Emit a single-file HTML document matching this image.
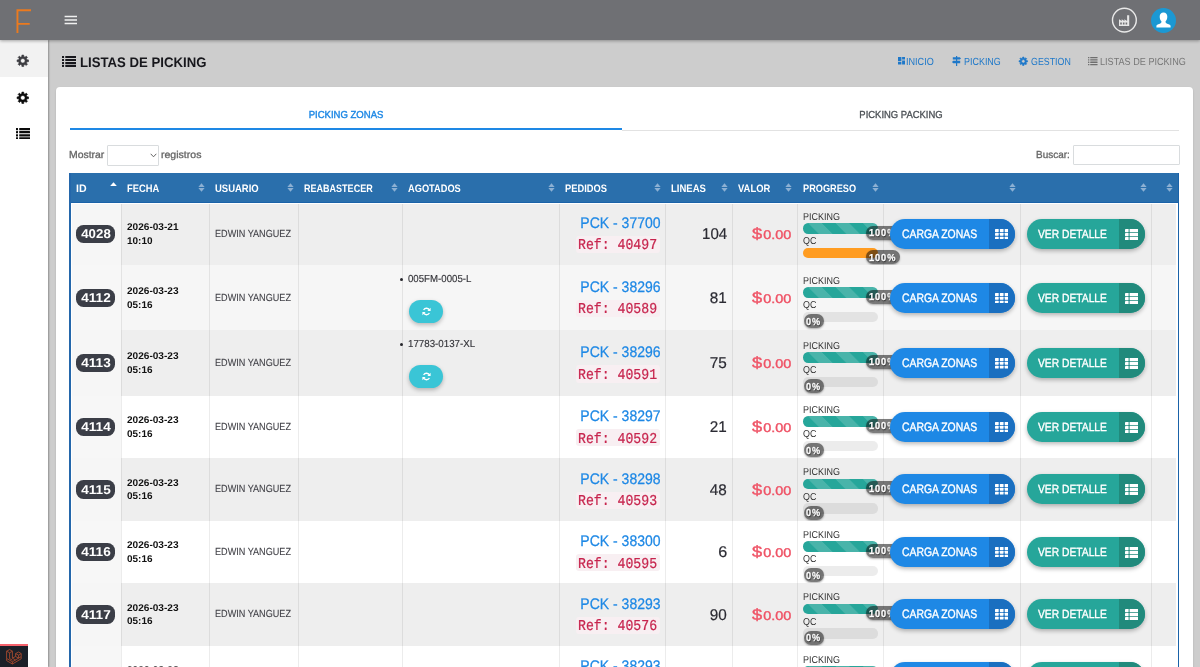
<!DOCTYPE html>
<html lang="es"><head><meta charset="utf-8"><title>Listas de Picking</title>
<style>
html,body{margin:0;padding:0}
body{width:1200px;height:667px;overflow:hidden;background:#cdcdcd;position:relative;font-family:'Liberation Sans',sans-serif}
.a{position:absolute;display:block}
.t{position:absolute;white-space:nowrap;display:block;text-rendering:geometricPrecision}
#top{left:0;top:0;width:1200px;height:40.4px;background:#6f7074;box-shadow:0 1px 3px rgba(0,0,0,.32);z-index:5}
#side{left:0;top:40px;width:48px;height:627px;background:#fff;box-shadow:1px 0 1.5px rgba(0,0,0,.3);z-index:4}
#card{left:56px;top:87px;width:1137px;height:600px;background:#fff;border-radius:4px;box-shadow:0 1px 2px rgba(0,0,0,.15)}
.row{left:71.8px;width:1104.6px}
.sep{top:0;width:1px;height:100%;background:rgba(0,0,0,.075)}
.badge{background:#3b3e47;border-radius:7.5px;height:18.2px;width:39.3px}
.btn{height:30px;border-radius:15px;overflow:hidden;box-shadow:0 2px 4px rgba(0,0,0,.28)}
.pill{border-radius:7px;background:rgba(10,10,10,.53);height:14px;box-shadow:0 1px 2px rgba(0,0,0,.3)}
#w{left:0;top:0;width:1200px;height:667px;overflow:hidden;will-change:transform}
</style></head><body><div id="w" class="a">

<svg class="a" style="left:62px;top:56px" width="14.3" height="10.9" viewBox="0 0 14.3 10.9"><rect x="0" y="0.00" width="2.04" height="2.07" rx="0.3" fill="#17171c"/><rect x="3.27" y="0.00" width="11.03" height="2.07" rx="0.3" fill="#17171c"/><rect x="0" y="2.94" width="2.04" height="2.07" rx="0.3" fill="#17171c"/><rect x="3.27" y="2.94" width="11.03" height="2.07" rx="0.3" fill="#17171c"/><rect x="0" y="5.89" width="2.04" height="2.07" rx="0.3" fill="#17171c"/><rect x="3.27" y="5.89" width="11.03" height="2.07" rx="0.3" fill="#17171c"/><rect x="0" y="8.83" width="2.04" height="2.07" rx="0.3" fill="#17171c"/><rect x="3.27" y="8.83" width="11.03" height="2.07" rx="0.3" fill="#17171c"/></svg>
<span class="t" style="left:80.14px;transform-origin:0 50%;transform:scale(0.2353,0.2484);top:25.90px;font-size:56px;line-height:72px;color:#17171c;font-weight:700;font-family:'Liberation Sans',sans-serif;">LISTAS DE PICKING</span>
<svg class="a" style="left:897.5px;top:57.2px" width="7.5" height="7.6" viewBox="0 0 7.5 7.6"><path d="M0 0h3.4v4.2h-3.4z M4.1 0h3.4v2.6h-3.4z M0 5h3.4v2.6h-3.4z M4.1 3.4h3.4v4.2h-3.4z" fill="#1e78c9"/></svg>
<span class="t" style="left:905.90px;transform-origin:0 50%;transform:scale(0.2274,0.2572);top:35.80px;font-size:40px;line-height:52px;color:#1e78c9;font-weight:400;font-family:'Liberation Sans',sans-serif;">INICIO</span>
<svg class="a" style="left:952px;top:56px" width="9" height="10" viewBox="0 0 9 10"><path d="M4 0h1.2v10h-1.2z M0.8 1.2h7l1.2 1.2l-1.2 1.2h-7z M1.2 4.8h7v2.4h-7l-1.2 -1.2z" fill="#1e78c9"/></svg>
<span class="t" style="left:964.40px;transform-origin:0 50%;transform:scale(0.2237,0.2572);top:35.80px;font-size:40px;line-height:52px;color:#1e78c9;font-weight:400;font-family:'Liberation Sans',sans-serif;">PICKING</span>
<svg class="a" style="left:1018.4000000000001px;top:55.900000000000006px" width="10.6" height="10.6" viewBox="-5.3 -5.3 10.6 10.6"><path d="M3.10 -0.71 L4.25 -0.67 L4.25 0.67 L3.10 0.71 L2.70 1.69 L3.48 2.53 L2.53 3.48 L1.69 2.70 L0.71 3.10 L0.67 4.25 L-0.67 4.25 L-0.71 3.10 L-1.69 2.70 L-2.53 3.48 L-3.48 2.53 L-2.70 1.69 L-3.10 0.71 L-4.25 0.67 L-4.25 -0.67 L-3.10 -0.71 L-2.70 -1.69 L-3.48 -2.53 L-2.53 -3.48 L-1.69 -2.70 L-0.71 -3.10 L-0.67 -4.25 L0.67 -4.25 L0.71 -3.10 L1.69 -2.70 L2.53 -3.48 L3.48 -2.53 L2.70 -1.69 Z M-1.72 0.00 a1.72 1.72 0 1 0 3.44 0 a1.72 1.72 0 1 0 -3.44 0 Z" fill="#1e78c9" fill-rule="evenodd" stroke="#1e78c9" stroke-width="0.6" stroke-linejoin="round"/></svg>
<span class="t" style="left:1030.60px;transform-origin:0 50%;transform:scale(0.2211,0.2572);top:35.80px;font-size:40px;line-height:52px;color:#1e78c9;font-weight:400;font-family:'Liberation Sans',sans-serif;">GESTION</span>
<svg class="a" style="left:1088.4px;top:57.4px" width="9.6" height="8.2" viewBox="0 0 9.6 8.2"><rect x="0" y="0.00" width="1.37" height="1.31" rx="0.3" fill="#6e6e6e"/><rect x="2.19" y="0.00" width="7.41" height="1.31" rx="0.3" fill="#6e6e6e"/><rect x="0" y="2.30" width="1.37" height="1.31" rx="0.3" fill="#6e6e6e"/><rect x="2.19" y="2.30" width="7.41" height="1.31" rx="0.3" fill="#6e6e6e"/><rect x="0" y="4.59" width="1.37" height="1.31" rx="0.3" fill="#6e6e6e"/><rect x="2.19" y="4.59" width="7.41" height="1.31" rx="0.3" fill="#6e6e6e"/><rect x="0" y="6.89" width="1.37" height="1.31" rx="0.3" fill="#6e6e6e"/><rect x="2.19" y="6.89" width="7.41" height="1.31" rx="0.3" fill="#6e6e6e"/></svg>
<span class="t" style="left:1100.20px;transform-origin:0 50%;transform:scale(0.2275,0.2572);top:35.80px;font-size:40px;line-height:52px;color:#777;font-weight:400;font-family:'Liberation Sans',sans-serif;">LISTAS DE PICKING</span>
<div id="card" class="a"></div>
<span class="t" style="left:346.1px;transform-origin:50% 50%;transform:translateX(-50%) scale(0.2384,0.2536);top:88.60px;font-size:40px;line-height:52px;color:#1e88e5;font-weight:400;font-family:'Liberation Sans',sans-serif;-webkit-text-stroke:1.6px #1e88e5;">PICKING ZONAS</span>
<span class="t" style="left:901px;transform-origin:50% 50%;transform:translateX(-50%) scale(0.2362,0.2536);top:88.60px;font-size:40px;line-height:52px;color:#4b5055;font-weight:400;font-family:'Liberation Sans',sans-serif;-webkit-text-stroke:1.2px #4b5055;">PICKING PACKING</span>
<div class="a" style="left:622px;top:129.5px;width:557px;height:1px;background:#e2e2e2"></div>
<div class="a" style="left:69.5px;top:128.2px;width:552.8px;height:1.9px;background:#1e88e5"></div>
<span class="t" style="left:69.35px;transform-origin:0 50%;transform:scale(0.2604,0.2536);top:128.70px;font-size:40px;line-height:52px;color:#666;font-weight:400;font-family:'Liberation Sans',sans-serif;-webkit-text-stroke:1.2px #666;">Mostrar</span>
<div class="a" style="left:107.2px;top:145px;width:49.8px;height:18.6px;border:1px solid #d9dcde;border-radius:1px;background:#fff;box-sizing:content-box"></div>
<svg class="a" style="left:149.6px;top:153.3px" width="7" height="5" viewBox="0 0 7 5"><path d="M0.7 0.8 L3.5 3.8 L6.3 0.8" fill="none" stroke="#555" stroke-width="0.9"/></svg>
<span class="t" style="left:161.35px;transform-origin:0 50%;transform:scale(0.2634,0.2536);top:128.70px;font-size:40px;line-height:52px;color:#666;font-weight:400;font-family:'Liberation Sans',sans-serif;-webkit-text-stroke:1.2px #666;">registros</span>
<span class="t" style="left:1035.60px;transform-origin:0 50%;transform:scale(0.2492,0.2536);top:128.60px;font-size:40px;line-height:52px;color:#666;font-weight:400;font-family:'Liberation Sans',sans-serif;-webkit-text-stroke:1.2px #666;">Buscar:</span>
<div class="a" style="left:1073.3px;top:145px;width:104.4px;height:18.4px;border:1px solid #d9dcde;border-radius:1px;background:#fff;box-sizing:content-box"></div>
<div class="a" style="left:69.2px;top:173px;width:1109.8px;height:29.5px;background:#2a6fac;border-bottom:1.2px solid #1a62a8;box-sizing:border-box"></div>
<div class="a" style="left:69.2px;top:173px;width:1.6px;height:500px;background:#2467ab"></div>
<div class="a" style="left:1177.9px;top:173px;width:1.2px;height:500px;background:#1a62a8"></div>
<span class="t" style="left:75.90px;transform-origin:0 50%;transform:scale(0.2650,0.2681);top:162.60px;font-size:40px;line-height:52px;color:#fff;font-weight:700;font-family:'Liberation Sans',sans-serif;">ID</span>
<span class="t" style="left:126.60px;transform-origin:0 50%;transform:scale(0.2337,0.2681);top:162.60px;font-size:40px;line-height:52px;color:#fff;font-weight:700;font-family:'Liberation Sans',sans-serif;">FECHA</span>
<span class="t" style="left:215.00px;transform-origin:0 50%;transform:scale(0.2369,0.2681);top:162.60px;font-size:40px;line-height:52px;color:#fff;font-weight:700;font-family:'Liberation Sans',sans-serif;">USUARIO</span>
<span class="t" style="left:303.90px;transform-origin:0 50%;transform:scale(0.2256,0.2681);top:162.60px;font-size:40px;line-height:52px;color:#fff;font-weight:700;font-family:'Liberation Sans',sans-serif;">REABASTECER</span>
<span class="t" style="left:408.40px;transform-origin:0 50%;transform:scale(0.2314,0.2681);top:162.60px;font-size:40px;line-height:52px;color:#fff;font-weight:700;font-family:'Liberation Sans',sans-serif;">AGOTADOS</span>
<span class="t" style="left:565.30px;transform-origin:0 50%;transform:scale(0.2338,0.2681);top:162.60px;font-size:40px;line-height:52px;color:#fff;font-weight:700;font-family:'Liberation Sans',sans-serif;">PEDIDOS</span>
<span class="t" style="left:671.40px;transform-origin:0 50%;transform:scale(0.2379,0.2681);top:162.60px;font-size:40px;line-height:52px;color:#fff;font-weight:700;font-family:'Liberation Sans',sans-serif;">LINEAS</span>
<span class="t" style="left:738.10px;transform-origin:0 50%;transform:scale(0.2357,0.2681);top:162.60px;font-size:40px;line-height:52px;color:#fff;font-weight:700;font-family:'Liberation Sans',sans-serif;">VALOR</span>
<span class="t" style="left:802.60px;transform-origin:0 50%;transform:scale(0.2297,0.2681);top:162.60px;font-size:40px;line-height:52px;color:#fff;font-weight:700;font-family:'Liberation Sans',sans-serif;">PROGRESO</span>
<svg class="a" style="left:109.7px;top:182.0px" width="7" height="4" viewBox="0 0 7 4"><path d="M0.2 4 L3.5 0.2 L6.8 4 Z" fill="#fff"/></svg>
<svg class="a" style="left:197.8px;top:183.3px" width="7" height="9" viewBox="0 0 7 9"><path d="M0.35 4.1 L3.5 0.3 L6.65 4.1 Z M0.35 4.9 L3.5 8.7 L6.65 4.9 Z" fill="#8cb0d3"/></svg>
<svg class="a" style="left:286.5px;top:183.3px" width="7" height="9" viewBox="0 0 7 9"><path d="M0.35 4.1 L3.5 0.3 L6.65 4.1 Z M0.35 4.9 L3.5 8.7 L6.65 4.9 Z" fill="#8cb0d3"/></svg>
<svg class="a" style="left:390.5px;top:183.3px" width="7" height="9" viewBox="0 0 7 9"><path d="M0.35 4.1 L3.5 0.3 L6.65 4.1 Z M0.35 4.9 L3.5 8.7 L6.65 4.9 Z" fill="#8cb0d3"/></svg>
<svg class="a" style="left:547.5px;top:183.3px" width="7" height="9" viewBox="0 0 7 9"><path d="M0.35 4.1 L3.5 0.3 L6.65 4.1 Z M0.35 4.9 L3.5 8.7 L6.65 4.9 Z" fill="#8cb0d3"/></svg>
<svg class="a" style="left:654.0px;top:183.3px" width="7" height="9" viewBox="0 0 7 9"><path d="M0.35 4.1 L3.5 0.3 L6.65 4.1 Z M0.35 4.9 L3.5 8.7 L6.65 4.9 Z" fill="#8cb0d3"/></svg>
<svg class="a" style="left:720.5px;top:183.3px" width="7" height="9" viewBox="0 0 7 9"><path d="M0.35 4.1 L3.5 0.3 L6.65 4.1 Z M0.35 4.9 L3.5 8.7 L6.65 4.9 Z" fill="#8cb0d3"/></svg>
<svg class="a" style="left:785.2px;top:183.3px" width="7" height="9" viewBox="0 0 7 9"><path d="M0.35 4.1 L3.5 0.3 L6.65 4.1 Z M0.35 4.9 L3.5 8.7 L6.65 4.9 Z" fill="#8cb0d3"/></svg>
<svg class="a" style="left:872.0px;top:183.3px" width="7" height="9" viewBox="0 0 7 9"><path d="M0.35 4.1 L3.5 0.3 L6.65 4.1 Z M0.35 4.9 L3.5 8.7 L6.65 4.9 Z" fill="#8cb0d3"/></svg>
<svg class="a" style="left:1008.9px;top:183.3px" width="7" height="9" viewBox="0 0 7 9"><path d="M0.35 4.1 L3.5 0.3 L6.65 4.1 Z M0.35 4.9 L3.5 8.7 L6.65 4.9 Z" fill="#8cb0d3"/></svg>
<svg class="a" style="left:1139.5px;top:183.3px" width="7" height="9" viewBox="0 0 7 9"><path d="M0.35 4.1 L3.5 0.3 L6.65 4.1 Z M0.35 4.9 L3.5 8.7 L6.65 4.9 Z" fill="#8cb0d3"/></svg>
<svg class="a" style="left:1165.7px;top:183.3px" width="7" height="9" viewBox="0 0 7 9"><path d="M0.35 4.1 L3.5 0.3 L6.65 4.1 Z M0.35 4.9 L3.5 8.7 L6.65 4.9 Z" fill="#8cb0d3"/></svg>
<div class="a row" style="top:204.1px;height:61.00000000000003px;background:#eeeeee">
<div class="a" style="left:0;top:0;width:49.2px;height:100%;background:#f6f6f6"></div>
<div class="a sep" style="left:49.2px"></div>
<div class="a sep" style="left:137.2px"></div>
<div class="a sep" style="left:226.2px"></div>
<div class="a sep" style="left:330.7px"></div>
<div class="a sep" style="left:487.2px"></div>
<div class="a sep" style="left:593.7px"></div>
<div class="a sep" style="left:660.2px"></div>
<div class="a sep" style="left:725.2px"></div>
<div class="a sep" style="left:811.7px"></div>
<div class="a sep" style="left:948.5px"></div>
<div class="a sep" style="left:1079.2px"></div>
</div>
<div class="a badge" style="left:76.2px;top:224.90px"></div>
<span class="t" style="left:95.75px;transform-origin:50% 50%;transform:translateX(-50%) scale(0.2553,0.2480);top:200.00px;font-size:52px;line-height:68px;color:#fff;font-weight:700;font-family:'Liberation Sans',sans-serif;">4028</span>
<span class="t" style="left:126.90px;transform-origin:0 50%;transform:scale(0.2517,0.2464);top:201.10px;font-size:40px;line-height:52px;color:#111;font-weight:700;font-family:'Liberation Sans',sans-serif;">2026-03-21</span>
<span class="t" style="left:126.90px;transform-origin:0 50%;transform:scale(0.2492,0.2464);top:214.60px;font-size:40px;line-height:52px;color:#111;font-weight:700;font-family:'Liberation Sans',sans-serif;">10:10</span>
<span class="t" style="left:215.28px;transform-origin:0 50%;transform:scale(0.2165,0.2450);top:205.60px;font-size:42.0px;line-height:56px;color:#3f3f45;font-weight:400;font-family:'Liberation Sans',sans-serif;-webkit-text-stroke:0.4px #3f3f45;">EDWIN YANGUEZ</span>
<span class="t" style="right:539.70px;transform-origin:100% 50%;transform:scale(0.2334,0.2560);top:183.25px;font-size:60px;line-height:80px;color:#1e88e5;font-weight:400;font-family:'Liberation Sans',sans-serif;-webkit-text-stroke:1.0px #1e88e5;">PCK - 37700</span>
<div class="a" style="left:576px;top:236.10px;width:83.6px;height:17.3px;border-radius:3px;background:#f8eff2"></div>
<span class="t" style="right:542.66px;transform-origin:100% 50%;transform:scale(0.2440,0.2806);top:209.45px;font-size:54.0px;line-height:72px;color:#c7254e;font-weight:400;font-family:'Liberation Mono',monospace;-webkit-text-stroke:0.88px #c7254e;">Ref: 40497</span>
<span class="t" style="right:473.00px;transform-origin:100% 50%;transform:scale(0.2507,0.2585);top:193.95px;font-size:60px;line-height:80px;color:#2b2b33;font-weight:400;font-family:'Liberation Sans',sans-serif;-webkit-text-stroke:0.8px #2b2b33;">104</span>
<span class="t" style="left:751.96px;transform-origin:0 50%;transform:scale(0.2853,0.2500);top:190.05px;font-size:64px;line-height:84px;color:#ef5366;font-weight:400;font-family:'Liberation Sans',sans-serif;-webkit-text-stroke:1.6px #ef5366;">$<span style="font-size:.79em;margin-left:.08em">0.00</span></span>
<span class="t" style="left:803.30px;transform-origin:0 50%;transform:scale(0.2249,0.2500);top:190.70px;font-size:40px;line-height:52px;color:#333;font-weight:400;font-family:'Liberation Sans',sans-serif;">PICKING</span>
<div class="a" style="left:803.2px;top:223.30px;width:74.5px;height:10.4px;border-radius:5.2px;background-color:#26a69a;background-image:linear-gradient(45deg,rgba(255,255,255,.16) 25%,transparent 25%,transparent 50%,rgba(255,255,255,.16) 50%,rgba(255,255,255,.16) 75%,transparent 75%,transparent);background-size:27.4px 27.4px;background-position:4.5px 0;"></div>
<div class="a pill" style="left:866px;top:225.60px;width:33.5px"></div>
<span class="t" style="left:869.00px;transform-origin:0 50%;transform:scale(0.2309,0.2536);top:207.20px;font-size:40px;line-height:52px;color:#fff;font-weight:700;font-family:'Liberation Sans',sans-serif;-webkit-text-stroke:1.0px #fff;text-shadow:2px 2px 6px rgba(0,0,0,.8);letter-spacing:4px;">100%</span>
<span class="t" style="left:803.30px;transform-origin:0 50%;transform:scale(0.2233,0.2500);top:215.10px;font-size:40px;line-height:52px;color:#333;font-weight:400;font-family:'Liberation Sans',sans-serif;">QC</span>
<div class="a" style="left:803.2px;top:247.80px;width:74.5px;height:10.4px;border-radius:5.2px;background:#ff9c21"></div>
<div class="a pill" style="left:866px;top:250.10px;width:33.5px"></div>
<span class="t" style="left:869.00px;transform-origin:0 50%;transform:scale(0.2309,0.2536);top:231.70px;font-size:40px;line-height:52px;color:#fff;font-weight:700;font-family:'Liberation Sans',sans-serif;-webkit-text-stroke:1.0px #fff;text-shadow:2px 2px 6px rgba(0,0,0,.8);letter-spacing:4px;">100%</span>
<div class="a btn" style="left:890px;top:218.85px;width:125px;background:#1e88e5"><div class="a" style="left:98.5px;top:0;width:27px;height:30px;background:#1a6fc0"></div></div>
<span class="t" style="left:901.82px;transform-origin:0 50%;transform:scale(0.2165,0.2536);top:201.60px;font-size:48px;line-height:64px;color:#fff;font-weight:400;font-family:'Liberation Sans',sans-serif;-webkit-text-stroke:1.4px #fff;">CARGA ZONAS</span>
<svg class="a" style="left:994.7px;top:228.85px" width="13.4" height="10.6" viewBox="0 0 13.4 10.6"><rect x="0.00" y="0.00" width="3.7" height="2.9" rx="0.5" fill="#fff"/><rect x="0.00" y="3.85" width="3.7" height="2.9" rx="0.5" fill="#fff"/><rect x="0.00" y="7.70" width="3.7" height="2.9" rx="0.5" fill="#fff"/><rect x="4.85" y="0.00" width="3.7" height="2.9" rx="0.5" fill="#fff"/><rect x="4.85" y="3.85" width="3.7" height="2.9" rx="0.5" fill="#fff"/><rect x="4.85" y="7.70" width="3.7" height="2.9" rx="0.5" fill="#fff"/><rect x="9.70" y="0.00" width="3.7" height="2.9" rx="0.5" fill="#fff"/><rect x="9.70" y="3.85" width="3.7" height="2.9" rx="0.5" fill="#fff"/><rect x="9.70" y="7.70" width="3.7" height="2.9" rx="0.5" fill="#fff"/></svg>
<div class="a btn" style="left:1026.7px;top:218.85px;width:118.5px;background:#26a69a"><div class="a" style="left:92.5px;top:0;width:27px;height:30px;background:#218a7c"></div></div>
<span class="t" style="left:1038.42px;transform-origin:0 50%;transform:scale(0.2142,0.2476);top:201.75px;font-size:48px;line-height:64px;color:#fff;font-weight:400;font-family:'Liberation Sans',sans-serif;-webkit-text-stroke:1.4px #fff;">VER DETALLE</span>
<svg class="a" style="left:1125px;top:228.75px" width="13.4" height="11.2" viewBox="0 0 13.4 11.2"><rect x="0" y="0.00" width="3.6" height="3.2" rx="0.4" fill="#fff"/><rect x="4.6" y="0.00" width="8.8" height="3.2" rx="0.4" fill="#fff"/><rect x="0" y="4.00" width="3.6" height="3.2" rx="0.4" fill="#fff"/><rect x="4.6" y="4.00" width="8.8" height="3.2" rx="0.4" fill="#fff"/><rect x="0" y="8.00" width="3.6" height="3.2" rx="0.4" fill="#fff"/><rect x="4.6" y="8.00" width="8.8" height="3.2" rx="0.4" fill="#fff"/></svg>
<div class="a row" style="top:265.1px;height:65.29999999999995px;background:#f6f6f6">
<div class="a" style="left:0;top:0;width:49.2px;height:100%;background:#f7f7f7"></div>
<div class="a sep" style="left:49.2px"></div>
<div class="a sep" style="left:137.2px"></div>
<div class="a sep" style="left:226.2px"></div>
<div class="a sep" style="left:330.7px"></div>
<div class="a sep" style="left:487.2px"></div>
<div class="a sep" style="left:593.7px"></div>
<div class="a sep" style="left:660.2px"></div>
<div class="a sep" style="left:725.2px"></div>
<div class="a sep" style="left:811.7px"></div>
<div class="a sep" style="left:948.5px"></div>
<div class="a sep" style="left:1079.2px"></div>
</div>
<div class="a badge" style="left:76.2px;top:288.80px"></div>
<span class="t" style="left:95.75px;transform-origin:50% 50%;transform:translateX(-50%) scale(0.2619,0.2480);top:263.90px;font-size:52px;line-height:68px;color:#fff;font-weight:700;font-family:'Liberation Sans',sans-serif;">4112</span>
<span class="t" style="left:126.90px;transform-origin:0 50%;transform:scale(0.2517,0.2464);top:265.00px;font-size:40px;line-height:52px;color:#111;font-weight:700;font-family:'Liberation Sans',sans-serif;">2026-03-23</span>
<span class="t" style="left:126.90px;transform-origin:0 50%;transform:scale(0.2492,0.2464);top:278.50px;font-size:40px;line-height:52px;color:#111;font-weight:700;font-family:'Liberation Sans',sans-serif;">05:16</span>
<span class="t" style="left:215.28px;transform-origin:0 50%;transform:scale(0.2165,0.2450);top:269.50px;font-size:42.0px;line-height:56px;color:#3f3f45;font-weight:400;font-family:'Liberation Sans',sans-serif;-webkit-text-stroke:0.4px #3f3f45;">EDWIN YANGUEZ</span>
<div class="a" style="left:400.1px;top:277.6px;width:3.2px;height:3.2px;border-radius:2px;background:#26262b"></div>
<span class="t" style="left:408.30px;transform-origin:0 50%;transform:scale(0.2416,0.2536);top:253.00px;font-size:40px;line-height:52px;color:#333338;font-weight:400;font-family:'Liberation Sans',sans-serif;-webkit-text-stroke:0.6px #333338;">005FM-0005-L</span>
<div class="a" style="left:408.7px;top:299.8px;width:34.6px;height:23.3px;border-radius:12px;background:#3ac5d6;box-shadow:0 2px 4px rgba(0,0,0,.25)"></div>
<svg class="a" style="left:421.5px;top:307.1px" width="9" height="9" viewBox="0 0 9 9"><path d="M7.6 3.4 A3.3 3.3 0 0 0 1.6 3" fill="none" stroke="#fff" stroke-width="1.3"/><path d="M1.4 5.6 A3.3 3.3 0 0 0 7.4 6" fill="none" stroke="#fff" stroke-width="1.3"/><path d="M8.6 0.8 V4 H5.4 Z M0.4 8.2 V5 H3.6 Z" fill="#fff"/></svg>
<span class="t" style="right:539.70px;transform-origin:100% 50%;transform:scale(0.2334,0.2560);top:247.15px;font-size:60px;line-height:80px;color:#1e88e5;font-weight:400;font-family:'Liberation Sans',sans-serif;-webkit-text-stroke:1.0px #1e88e5;">PCK - 38296</span>
<div class="a" style="left:576px;top:300.00px;width:83.6px;height:17.3px;border-radius:3px;background:#f8eff2"></div>
<span class="t" style="right:542.66px;transform-origin:100% 50%;transform:scale(0.2440,0.2806);top:273.35px;font-size:54.0px;line-height:72px;color:#c7254e;font-weight:400;font-family:'Liberation Mono',monospace;-webkit-text-stroke:0.88px #c7254e;">Ref: 40589</span>
<span class="t" style="right:473.00px;transform-origin:100% 50%;transform:scale(0.2547,0.2585);top:257.85px;font-size:60px;line-height:80px;color:#2b2b33;font-weight:400;font-family:'Liberation Sans',sans-serif;-webkit-text-stroke:0.8px #2b2b33;">81</span>
<span class="t" style="left:751.96px;transform-origin:0 50%;transform:scale(0.2853,0.2500);top:253.95px;font-size:64px;line-height:84px;color:#ef5366;font-weight:400;font-family:'Liberation Sans',sans-serif;-webkit-text-stroke:1.6px #ef5366;">$<span style="font-size:.79em;margin-left:.08em">0.00</span></span>
<span class="t" style="left:803.30px;transform-origin:0 50%;transform:scale(0.2249,0.2500);top:254.60px;font-size:40px;line-height:52px;color:#333;font-weight:400;font-family:'Liberation Sans',sans-serif;">PICKING</span>
<div class="a" style="left:803.2px;top:287.20px;width:74.5px;height:10.4px;border-radius:5.2px;background-color:#26a69a;background-image:linear-gradient(45deg,rgba(255,255,255,.16) 25%,transparent 25%,transparent 50%,rgba(255,255,255,.16) 50%,rgba(255,255,255,.16) 75%,transparent 75%,transparent);background-size:27.4px 27.4px;background-position:4.5px 0;"></div>
<div class="a pill" style="left:866px;top:289.50px;width:33.5px"></div>
<span class="t" style="left:869.00px;transform-origin:0 50%;transform:scale(0.2309,0.2536);top:271.10px;font-size:40px;line-height:52px;color:#fff;font-weight:700;font-family:'Liberation Sans',sans-serif;-webkit-text-stroke:1.0px #fff;text-shadow:2px 2px 6px rgba(0,0,0,.8);letter-spacing:4px;">100%</span>
<span class="t" style="left:803.30px;transform-origin:0 50%;transform:scale(0.2233,0.2500);top:279.00px;font-size:40px;line-height:52px;color:#333;font-weight:400;font-family:'Liberation Sans',sans-serif;">QC</span>
<div class="a" style="left:803.2px;top:311.80px;width:74.7px;height:10.2px;border-radius:5.1px;background:rgba(0,0,0,.075)"></div>
<div class="a pill" style="left:803.8px;top:314.10px;width:20.5px"></div>
<span class="t" style="left:806.20px;transform-origin:0 50%;transform:scale(0.2281,0.2536);top:295.70px;font-size:40px;line-height:52px;color:#fff;font-weight:700;font-family:'Liberation Sans',sans-serif;-webkit-text-stroke:1.0px #fff;text-shadow:2px 2px 6px rgba(0,0,0,.8);letter-spacing:4px;">0%</span>
<div class="a btn" style="left:890px;top:282.75px;width:125px;background:#1e88e5"><div class="a" style="left:98.5px;top:0;width:27px;height:30px;background:#1a6fc0"></div></div>
<span class="t" style="left:901.82px;transform-origin:0 50%;transform:scale(0.2165,0.2536);top:265.50px;font-size:48px;line-height:64px;color:#fff;font-weight:400;font-family:'Liberation Sans',sans-serif;-webkit-text-stroke:1.4px #fff;">CARGA ZONAS</span>
<svg class="a" style="left:994.7px;top:292.75px" width="13.4" height="10.6" viewBox="0 0 13.4 10.6"><rect x="0.00" y="0.00" width="3.7" height="2.9" rx="0.5" fill="#fff"/><rect x="0.00" y="3.85" width="3.7" height="2.9" rx="0.5" fill="#fff"/><rect x="0.00" y="7.70" width="3.7" height="2.9" rx="0.5" fill="#fff"/><rect x="4.85" y="0.00" width="3.7" height="2.9" rx="0.5" fill="#fff"/><rect x="4.85" y="3.85" width="3.7" height="2.9" rx="0.5" fill="#fff"/><rect x="4.85" y="7.70" width="3.7" height="2.9" rx="0.5" fill="#fff"/><rect x="9.70" y="0.00" width="3.7" height="2.9" rx="0.5" fill="#fff"/><rect x="9.70" y="3.85" width="3.7" height="2.9" rx="0.5" fill="#fff"/><rect x="9.70" y="7.70" width="3.7" height="2.9" rx="0.5" fill="#fff"/></svg>
<div class="a btn" style="left:1026.7px;top:282.75px;width:118.5px;background:#26a69a"><div class="a" style="left:92.5px;top:0;width:27px;height:30px;background:#218a7c"></div></div>
<span class="t" style="left:1038.42px;transform-origin:0 50%;transform:scale(0.2142,0.2476);top:265.65px;font-size:48px;line-height:64px;color:#fff;font-weight:400;font-family:'Liberation Sans',sans-serif;-webkit-text-stroke:1.4px #fff;">VER DETALLE</span>
<svg class="a" style="left:1125px;top:292.65px" width="13.4" height="11.2" viewBox="0 0 13.4 11.2"><rect x="0" y="0.00" width="3.6" height="3.2" rx="0.4" fill="#fff"/><rect x="4.6" y="0.00" width="8.8" height="3.2" rx="0.4" fill="#fff"/><rect x="0" y="4.00" width="3.6" height="3.2" rx="0.4" fill="#fff"/><rect x="4.6" y="4.00" width="8.8" height="3.2" rx="0.4" fill="#fff"/><rect x="0" y="8.00" width="3.6" height="3.2" rx="0.4" fill="#fff"/><rect x="4.6" y="8.00" width="8.8" height="3.2" rx="0.4" fill="#fff"/></svg>
<div class="a row" style="top:330.4px;height:65.25px;background:#eeeeee">
<div class="a" style="left:0;top:0;width:49.2px;height:100%;background:#f6f6f6"></div>
<div class="a sep" style="left:49.2px"></div>
<div class="a sep" style="left:137.2px"></div>
<div class="a sep" style="left:226.2px"></div>
<div class="a sep" style="left:330.7px"></div>
<div class="a sep" style="left:487.2px"></div>
<div class="a sep" style="left:593.7px"></div>
<div class="a sep" style="left:660.2px"></div>
<div class="a sep" style="left:725.2px"></div>
<div class="a sep" style="left:811.7px"></div>
<div class="a sep" style="left:948.5px"></div>
<div class="a sep" style="left:1079.2px"></div>
</div>
<div class="a badge" style="left:76.2px;top:354.07px"></div>
<span class="t" style="left:95.75px;transform-origin:50% 50%;transform:translateX(-50%) scale(0.2619,0.2480);top:329.17px;font-size:52px;line-height:68px;color:#fff;font-weight:700;font-family:'Liberation Sans',sans-serif;">4113</span>
<span class="t" style="left:126.90px;transform-origin:0 50%;transform:scale(0.2517,0.2464);top:330.27px;font-size:40px;line-height:52px;color:#111;font-weight:700;font-family:'Liberation Sans',sans-serif;">2026-03-23</span>
<span class="t" style="left:126.90px;transform-origin:0 50%;transform:scale(0.2492,0.2464);top:343.77px;font-size:40px;line-height:52px;color:#111;font-weight:700;font-family:'Liberation Sans',sans-serif;">05:16</span>
<span class="t" style="left:215.28px;transform-origin:0 50%;transform:scale(0.2165,0.2450);top:334.77px;font-size:42.0px;line-height:56px;color:#3f3f45;font-weight:400;font-family:'Liberation Sans',sans-serif;-webkit-text-stroke:0.4px #3f3f45;">EDWIN YANGUEZ</span>
<div class="a" style="left:400.1px;top:342.9px;width:3.2px;height:3.2px;border-radius:2px;background:#26262b"></div>
<span class="t" style="left:408.30px;transform-origin:0 50%;transform:scale(0.2433,0.2536);top:318.30px;font-size:40px;line-height:52px;color:#333338;font-weight:400;font-family:'Liberation Sans',sans-serif;-webkit-text-stroke:0.6px #333338;">17783-0137-XL</span>
<div class="a" style="left:408.7px;top:365.09999999999997px;width:34.6px;height:23.3px;border-radius:12px;background:#3ac5d6;box-shadow:0 2px 4px rgba(0,0,0,.25)"></div>
<svg class="a" style="left:421.5px;top:372.4px" width="9" height="9" viewBox="0 0 9 9"><path d="M7.6 3.4 A3.3 3.3 0 0 0 1.6 3" fill="none" stroke="#fff" stroke-width="1.3"/><path d="M1.4 5.6 A3.3 3.3 0 0 0 7.4 6" fill="none" stroke="#fff" stroke-width="1.3"/><path d="M8.6 0.8 V4 H5.4 Z M0.4 8.2 V5 H3.6 Z" fill="#fff"/></svg>
<span class="t" style="right:539.70px;transform-origin:100% 50%;transform:scale(0.2334,0.2560);top:312.42px;font-size:60px;line-height:80px;color:#1e88e5;font-weight:400;font-family:'Liberation Sans',sans-serif;-webkit-text-stroke:1.0px #1e88e5;">PCK - 38296</span>
<div class="a" style="left:576px;top:365.27px;width:83.6px;height:17.3px;border-radius:3px;background:#f8eff2"></div>
<span class="t" style="right:542.66px;transform-origin:100% 50%;transform:scale(0.2440,0.2806);top:338.62px;font-size:54.0px;line-height:72px;color:#c7254e;font-weight:400;font-family:'Liberation Mono',monospace;-webkit-text-stroke:0.88px #c7254e;">Ref: 40591</span>
<span class="t" style="right:473.00px;transform-origin:100% 50%;transform:scale(0.2547,0.2585);top:323.12px;font-size:60px;line-height:80px;color:#2b2b33;font-weight:400;font-family:'Liberation Sans',sans-serif;-webkit-text-stroke:0.8px #2b2b33;">75</span>
<span class="t" style="left:751.96px;transform-origin:0 50%;transform:scale(0.2853,0.2500);top:319.22px;font-size:64px;line-height:84px;color:#ef5366;font-weight:400;font-family:'Liberation Sans',sans-serif;-webkit-text-stroke:1.6px #ef5366;">$<span style="font-size:.79em;margin-left:.08em">0.00</span></span>
<span class="t" style="left:803.30px;transform-origin:0 50%;transform:scale(0.2249,0.2500);top:319.88px;font-size:40px;line-height:52px;color:#333;font-weight:400;font-family:'Liberation Sans',sans-serif;">PICKING</span>
<div class="a" style="left:803.2px;top:352.47px;width:74.5px;height:10.4px;border-radius:5.2px;background-color:#26a69a;background-image:linear-gradient(45deg,rgba(255,255,255,.16) 25%,transparent 25%,transparent 50%,rgba(255,255,255,.16) 50%,rgba(255,255,255,.16) 75%,transparent 75%,transparent);background-size:27.4px 27.4px;background-position:4.5px 0;"></div>
<div class="a pill" style="left:866px;top:354.77px;width:33.5px"></div>
<span class="t" style="left:869.00px;transform-origin:0 50%;transform:scale(0.2309,0.2536);top:336.38px;font-size:40px;line-height:52px;color:#fff;font-weight:700;font-family:'Liberation Sans',sans-serif;-webkit-text-stroke:1.0px #fff;text-shadow:2px 2px 6px rgba(0,0,0,.8);letter-spacing:4px;">100%</span>
<span class="t" style="left:803.30px;transform-origin:0 50%;transform:scale(0.2233,0.2500);top:344.27px;font-size:40px;line-height:52px;color:#333;font-weight:400;font-family:'Liberation Sans',sans-serif;">QC</span>
<div class="a" style="left:803.2px;top:377.07px;width:74.7px;height:10.2px;border-radius:5.1px;background:rgba(0,0,0,.075)"></div>
<div class="a pill" style="left:803.8px;top:379.38px;width:20.5px"></div>
<span class="t" style="left:806.20px;transform-origin:0 50%;transform:scale(0.2281,0.2536);top:360.97px;font-size:40px;line-height:52px;color:#fff;font-weight:700;font-family:'Liberation Sans',sans-serif;-webkit-text-stroke:1.0px #fff;text-shadow:2px 2px 6px rgba(0,0,0,.8);letter-spacing:4px;">0%</span>
<div class="a btn" style="left:890px;top:348.02px;width:125px;background:#1e88e5"><div class="a" style="left:98.5px;top:0;width:27px;height:30px;background:#1a6fc0"></div></div>
<span class="t" style="left:901.82px;transform-origin:0 50%;transform:scale(0.2165,0.2536);top:330.77px;font-size:48px;line-height:64px;color:#fff;font-weight:400;font-family:'Liberation Sans',sans-serif;-webkit-text-stroke:1.4px #fff;">CARGA ZONAS</span>
<svg class="a" style="left:994.7px;top:358.02px" width="13.4" height="10.6" viewBox="0 0 13.4 10.6"><rect x="0.00" y="0.00" width="3.7" height="2.9" rx="0.5" fill="#fff"/><rect x="0.00" y="3.85" width="3.7" height="2.9" rx="0.5" fill="#fff"/><rect x="0.00" y="7.70" width="3.7" height="2.9" rx="0.5" fill="#fff"/><rect x="4.85" y="0.00" width="3.7" height="2.9" rx="0.5" fill="#fff"/><rect x="4.85" y="3.85" width="3.7" height="2.9" rx="0.5" fill="#fff"/><rect x="4.85" y="7.70" width="3.7" height="2.9" rx="0.5" fill="#fff"/><rect x="9.70" y="0.00" width="3.7" height="2.9" rx="0.5" fill="#fff"/><rect x="9.70" y="3.85" width="3.7" height="2.9" rx="0.5" fill="#fff"/><rect x="9.70" y="7.70" width="3.7" height="2.9" rx="0.5" fill="#fff"/></svg>
<div class="a btn" style="left:1026.7px;top:348.02px;width:118.5px;background:#26a69a"><div class="a" style="left:92.5px;top:0;width:27px;height:30px;background:#218a7c"></div></div>
<span class="t" style="left:1038.42px;transform-origin:0 50%;transform:scale(0.2142,0.2476);top:330.92px;font-size:48px;line-height:64px;color:#fff;font-weight:400;font-family:'Liberation Sans',sans-serif;-webkit-text-stroke:1.4px #fff;">VER DETALLE</span>
<svg class="a" style="left:1125px;top:357.92px" width="13.4" height="11.2" viewBox="0 0 13.4 11.2"><rect x="0" y="0.00" width="3.6" height="3.2" rx="0.4" fill="#fff"/><rect x="4.6" y="0.00" width="8.8" height="3.2" rx="0.4" fill="#fff"/><rect x="0" y="4.00" width="3.6" height="3.2" rx="0.4" fill="#fff"/><rect x="4.6" y="4.00" width="8.8" height="3.2" rx="0.4" fill="#fff"/><rect x="0" y="8.00" width="3.6" height="3.2" rx="0.4" fill="#fff"/><rect x="4.6" y="8.00" width="8.8" height="3.2" rx="0.4" fill="#fff"/></svg>
<div class="a row" style="top:395.65px;height:62.5px;background:#ffffff">
<div class="a" style="left:0;top:0;width:49.2px;height:100%;background:#f7f7f7"></div>
<div class="a sep" style="left:49.2px"></div>
<div class="a sep" style="left:137.2px"></div>
<div class="a sep" style="left:226.2px"></div>
<div class="a sep" style="left:330.7px"></div>
<div class="a sep" style="left:487.2px"></div>
<div class="a sep" style="left:593.7px"></div>
<div class="a sep" style="left:660.2px"></div>
<div class="a sep" style="left:725.2px"></div>
<div class="a sep" style="left:811.7px"></div>
<div class="a sep" style="left:948.5px"></div>
<div class="a sep" style="left:1079.2px"></div>
</div>
<div class="a badge" style="left:76.2px;top:417.95px"></div>
<span class="t" style="left:95.75px;transform-origin:50% 50%;transform:translateX(-50%) scale(0.2619,0.2480);top:393.05px;font-size:52px;line-height:68px;color:#fff;font-weight:700;font-family:'Liberation Sans',sans-serif;">4114</span>
<span class="t" style="left:126.90px;transform-origin:0 50%;transform:scale(0.2517,0.2464);top:394.15px;font-size:40px;line-height:52px;color:#111;font-weight:700;font-family:'Liberation Sans',sans-serif;">2026-03-23</span>
<span class="t" style="left:126.90px;transform-origin:0 50%;transform:scale(0.2492,0.2464);top:407.65px;font-size:40px;line-height:52px;color:#111;font-weight:700;font-family:'Liberation Sans',sans-serif;">05:16</span>
<span class="t" style="left:215.28px;transform-origin:0 50%;transform:scale(0.2165,0.2450);top:398.65px;font-size:42.0px;line-height:56px;color:#3f3f45;font-weight:400;font-family:'Liberation Sans',sans-serif;-webkit-text-stroke:0.4px #3f3f45;">EDWIN YANGUEZ</span>
<span class="t" style="right:539.70px;transform-origin:100% 50%;transform:scale(0.2334,0.2560);top:376.30px;font-size:60px;line-height:80px;color:#1e88e5;font-weight:400;font-family:'Liberation Sans',sans-serif;-webkit-text-stroke:1.0px #1e88e5;">PCK - 38297</span>
<div class="a" style="left:576px;top:429.15px;width:83.6px;height:17.3px;border-radius:3px;background:#f8eff2"></div>
<span class="t" style="right:542.66px;transform-origin:100% 50%;transform:scale(0.2440,0.2806);top:402.50px;font-size:54.0px;line-height:72px;color:#c7254e;font-weight:400;font-family:'Liberation Mono',monospace;-webkit-text-stroke:0.88px #c7254e;">Ref: 40592</span>
<span class="t" style="right:473.00px;transform-origin:100% 50%;transform:scale(0.2547,0.2585);top:387.00px;font-size:60px;line-height:80px;color:#2b2b33;font-weight:400;font-family:'Liberation Sans',sans-serif;-webkit-text-stroke:0.8px #2b2b33;">21</span>
<span class="t" style="left:751.96px;transform-origin:0 50%;transform:scale(0.2853,0.2500);top:383.10px;font-size:64px;line-height:84px;color:#ef5366;font-weight:400;font-family:'Liberation Sans',sans-serif;-webkit-text-stroke:1.6px #ef5366;">$<span style="font-size:.79em;margin-left:.08em">0.00</span></span>
<span class="t" style="left:803.30px;transform-origin:0 50%;transform:scale(0.2249,0.2500);top:383.75px;font-size:40px;line-height:52px;color:#333;font-weight:400;font-family:'Liberation Sans',sans-serif;">PICKING</span>
<div class="a" style="left:803.2px;top:416.35px;width:74.5px;height:10.4px;border-radius:5.2px;background-color:#26a69a;background-image:linear-gradient(45deg,rgba(255,255,255,.16) 25%,transparent 25%,transparent 50%,rgba(255,255,255,.16) 50%,rgba(255,255,255,.16) 75%,transparent 75%,transparent);background-size:27.4px 27.4px;background-position:4.5px 0;"></div>
<div class="a pill" style="left:866px;top:418.65px;width:33.5px"></div>
<span class="t" style="left:869.00px;transform-origin:0 50%;transform:scale(0.2309,0.2536);top:400.25px;font-size:40px;line-height:52px;color:#fff;font-weight:700;font-family:'Liberation Sans',sans-serif;-webkit-text-stroke:1.0px #fff;text-shadow:2px 2px 6px rgba(0,0,0,.8);letter-spacing:4px;">100%</span>
<span class="t" style="left:803.30px;transform-origin:0 50%;transform:scale(0.2233,0.2500);top:408.15px;font-size:40px;line-height:52px;color:#333;font-weight:400;font-family:'Liberation Sans',sans-serif;">QC</span>
<div class="a" style="left:803.2px;top:440.95px;width:74.7px;height:10.2px;border-radius:5.1px;background:rgba(0,0,0,.075)"></div>
<div class="a pill" style="left:803.8px;top:443.25px;width:20.5px"></div>
<span class="t" style="left:806.20px;transform-origin:0 50%;transform:scale(0.2281,0.2536);top:424.85px;font-size:40px;line-height:52px;color:#fff;font-weight:700;font-family:'Liberation Sans',sans-serif;-webkit-text-stroke:1.0px #fff;text-shadow:2px 2px 6px rgba(0,0,0,.8);letter-spacing:4px;">0%</span>
<div class="a btn" style="left:890px;top:411.90px;width:125px;background:#1e88e5"><div class="a" style="left:98.5px;top:0;width:27px;height:30px;background:#1a6fc0"></div></div>
<span class="t" style="left:901.82px;transform-origin:0 50%;transform:scale(0.2165,0.2536);top:394.65px;font-size:48px;line-height:64px;color:#fff;font-weight:400;font-family:'Liberation Sans',sans-serif;-webkit-text-stroke:1.4px #fff;">CARGA ZONAS</span>
<svg class="a" style="left:994.7px;top:421.90px" width="13.4" height="10.6" viewBox="0 0 13.4 10.6"><rect x="0.00" y="0.00" width="3.7" height="2.9" rx="0.5" fill="#fff"/><rect x="0.00" y="3.85" width="3.7" height="2.9" rx="0.5" fill="#fff"/><rect x="0.00" y="7.70" width="3.7" height="2.9" rx="0.5" fill="#fff"/><rect x="4.85" y="0.00" width="3.7" height="2.9" rx="0.5" fill="#fff"/><rect x="4.85" y="3.85" width="3.7" height="2.9" rx="0.5" fill="#fff"/><rect x="4.85" y="7.70" width="3.7" height="2.9" rx="0.5" fill="#fff"/><rect x="9.70" y="0.00" width="3.7" height="2.9" rx="0.5" fill="#fff"/><rect x="9.70" y="3.85" width="3.7" height="2.9" rx="0.5" fill="#fff"/><rect x="9.70" y="7.70" width="3.7" height="2.9" rx="0.5" fill="#fff"/></svg>
<div class="a btn" style="left:1026.7px;top:411.90px;width:118.5px;background:#26a69a"><div class="a" style="left:92.5px;top:0;width:27px;height:30px;background:#218a7c"></div></div>
<span class="t" style="left:1038.42px;transform-origin:0 50%;transform:scale(0.2142,0.2476);top:394.80px;font-size:48px;line-height:64px;color:#fff;font-weight:400;font-family:'Liberation Sans',sans-serif;-webkit-text-stroke:1.4px #fff;">VER DETALLE</span>
<svg class="a" style="left:1125px;top:421.80px" width="13.4" height="11.2" viewBox="0 0 13.4 11.2"><rect x="0" y="0.00" width="3.6" height="3.2" rx="0.4" fill="#fff"/><rect x="4.6" y="0.00" width="8.8" height="3.2" rx="0.4" fill="#fff"/><rect x="0" y="4.00" width="3.6" height="3.2" rx="0.4" fill="#fff"/><rect x="4.6" y="4.00" width="8.8" height="3.2" rx="0.4" fill="#fff"/><rect x="0" y="8.00" width="3.6" height="3.2" rx="0.4" fill="#fff"/><rect x="4.6" y="8.00" width="8.8" height="3.2" rx="0.4" fill="#fff"/></svg>
<div class="a row" style="top:458.15px;height:62.5px;background:#eeeeee">
<div class="a" style="left:0;top:0;width:49.2px;height:100%;background:#f6f6f6"></div>
<div class="a sep" style="left:49.2px"></div>
<div class="a sep" style="left:137.2px"></div>
<div class="a sep" style="left:226.2px"></div>
<div class="a sep" style="left:330.7px"></div>
<div class="a sep" style="left:487.2px"></div>
<div class="a sep" style="left:593.7px"></div>
<div class="a sep" style="left:660.2px"></div>
<div class="a sep" style="left:725.2px"></div>
<div class="a sep" style="left:811.7px"></div>
<div class="a sep" style="left:948.5px"></div>
<div class="a sep" style="left:1079.2px"></div>
</div>
<div class="a badge" style="left:76.2px;top:480.45px"></div>
<span class="t" style="left:95.75px;transform-origin:50% 50%;transform:translateX(-50%) scale(0.2619,0.2480);top:455.55px;font-size:52px;line-height:68px;color:#fff;font-weight:700;font-family:'Liberation Sans',sans-serif;">4115</span>
<span class="t" style="left:126.90px;transform-origin:0 50%;transform:scale(0.2517,0.2464);top:456.65px;font-size:40px;line-height:52px;color:#111;font-weight:700;font-family:'Liberation Sans',sans-serif;">2026-03-23</span>
<span class="t" style="left:126.90px;transform-origin:0 50%;transform:scale(0.2492,0.2464);top:470.15px;font-size:40px;line-height:52px;color:#111;font-weight:700;font-family:'Liberation Sans',sans-serif;">05:16</span>
<span class="t" style="left:215.28px;transform-origin:0 50%;transform:scale(0.2165,0.2450);top:461.15px;font-size:42.0px;line-height:56px;color:#3f3f45;font-weight:400;font-family:'Liberation Sans',sans-serif;-webkit-text-stroke:0.4px #3f3f45;">EDWIN YANGUEZ</span>
<span class="t" style="right:539.70px;transform-origin:100% 50%;transform:scale(0.2334,0.2560);top:438.80px;font-size:60px;line-height:80px;color:#1e88e5;font-weight:400;font-family:'Liberation Sans',sans-serif;-webkit-text-stroke:1.0px #1e88e5;">PCK - 38298</span>
<div class="a" style="left:576px;top:491.65px;width:83.6px;height:17.3px;border-radius:3px;background:#f8eff2"></div>
<span class="t" style="right:542.66px;transform-origin:100% 50%;transform:scale(0.2440,0.2806);top:465.00px;font-size:54.0px;line-height:72px;color:#c7254e;font-weight:400;font-family:'Liberation Mono',monospace;-webkit-text-stroke:0.88px #c7254e;">Ref: 40593</span>
<span class="t" style="right:473.00px;transform-origin:100% 50%;transform:scale(0.2547,0.2585);top:449.50px;font-size:60px;line-height:80px;color:#2b2b33;font-weight:400;font-family:'Liberation Sans',sans-serif;-webkit-text-stroke:0.8px #2b2b33;">48</span>
<span class="t" style="left:751.96px;transform-origin:0 50%;transform:scale(0.2853,0.2500);top:445.60px;font-size:64px;line-height:84px;color:#ef5366;font-weight:400;font-family:'Liberation Sans',sans-serif;-webkit-text-stroke:1.6px #ef5366;">$<span style="font-size:.79em;margin-left:.08em">0.00</span></span>
<span class="t" style="left:803.30px;transform-origin:0 50%;transform:scale(0.2249,0.2500);top:446.25px;font-size:40px;line-height:52px;color:#333;font-weight:400;font-family:'Liberation Sans',sans-serif;">PICKING</span>
<div class="a" style="left:803.2px;top:478.85px;width:74.5px;height:10.4px;border-radius:5.2px;background-color:#26a69a;background-image:linear-gradient(45deg,rgba(255,255,255,.16) 25%,transparent 25%,transparent 50%,rgba(255,255,255,.16) 50%,rgba(255,255,255,.16) 75%,transparent 75%,transparent);background-size:27.4px 27.4px;background-position:4.5px 0;"></div>
<div class="a pill" style="left:866px;top:481.15px;width:33.5px"></div>
<span class="t" style="left:869.00px;transform-origin:0 50%;transform:scale(0.2309,0.2536);top:462.75px;font-size:40px;line-height:52px;color:#fff;font-weight:700;font-family:'Liberation Sans',sans-serif;-webkit-text-stroke:1.0px #fff;text-shadow:2px 2px 6px rgba(0,0,0,.8);letter-spacing:4px;">100%</span>
<span class="t" style="left:803.30px;transform-origin:0 50%;transform:scale(0.2233,0.2500);top:470.65px;font-size:40px;line-height:52px;color:#333;font-weight:400;font-family:'Liberation Sans',sans-serif;">QC</span>
<div class="a" style="left:803.2px;top:503.45px;width:74.7px;height:10.2px;border-radius:5.1px;background:rgba(0,0,0,.075)"></div>
<div class="a pill" style="left:803.8px;top:505.75px;width:20.5px"></div>
<span class="t" style="left:806.20px;transform-origin:0 50%;transform:scale(0.2281,0.2536);top:487.35px;font-size:40px;line-height:52px;color:#fff;font-weight:700;font-family:'Liberation Sans',sans-serif;-webkit-text-stroke:1.0px #fff;text-shadow:2px 2px 6px rgba(0,0,0,.8);letter-spacing:4px;">0%</span>
<div class="a btn" style="left:890px;top:474.40px;width:125px;background:#1e88e5"><div class="a" style="left:98.5px;top:0;width:27px;height:30px;background:#1a6fc0"></div></div>
<span class="t" style="left:901.82px;transform-origin:0 50%;transform:scale(0.2165,0.2536);top:457.15px;font-size:48px;line-height:64px;color:#fff;font-weight:400;font-family:'Liberation Sans',sans-serif;-webkit-text-stroke:1.4px #fff;">CARGA ZONAS</span>
<svg class="a" style="left:994.7px;top:484.40px" width="13.4" height="10.6" viewBox="0 0 13.4 10.6"><rect x="0.00" y="0.00" width="3.7" height="2.9" rx="0.5" fill="#fff"/><rect x="0.00" y="3.85" width="3.7" height="2.9" rx="0.5" fill="#fff"/><rect x="0.00" y="7.70" width="3.7" height="2.9" rx="0.5" fill="#fff"/><rect x="4.85" y="0.00" width="3.7" height="2.9" rx="0.5" fill="#fff"/><rect x="4.85" y="3.85" width="3.7" height="2.9" rx="0.5" fill="#fff"/><rect x="4.85" y="7.70" width="3.7" height="2.9" rx="0.5" fill="#fff"/><rect x="9.70" y="0.00" width="3.7" height="2.9" rx="0.5" fill="#fff"/><rect x="9.70" y="3.85" width="3.7" height="2.9" rx="0.5" fill="#fff"/><rect x="9.70" y="7.70" width="3.7" height="2.9" rx="0.5" fill="#fff"/></svg>
<div class="a btn" style="left:1026.7px;top:474.40px;width:118.5px;background:#26a69a"><div class="a" style="left:92.5px;top:0;width:27px;height:30px;background:#218a7c"></div></div>
<span class="t" style="left:1038.42px;transform-origin:0 50%;transform:scale(0.2142,0.2476);top:457.30px;font-size:48px;line-height:64px;color:#fff;font-weight:400;font-family:'Liberation Sans',sans-serif;-webkit-text-stroke:1.4px #fff;">VER DETALLE</span>
<svg class="a" style="left:1125px;top:484.30px" width="13.4" height="11.2" viewBox="0 0 13.4 11.2"><rect x="0" y="0.00" width="3.6" height="3.2" rx="0.4" fill="#fff"/><rect x="4.6" y="0.00" width="8.8" height="3.2" rx="0.4" fill="#fff"/><rect x="0" y="4.00" width="3.6" height="3.2" rx="0.4" fill="#fff"/><rect x="4.6" y="4.00" width="8.8" height="3.2" rx="0.4" fill="#fff"/><rect x="0" y="8.00" width="3.6" height="3.2" rx="0.4" fill="#fff"/><rect x="4.6" y="8.00" width="8.8" height="3.2" rx="0.4" fill="#fff"/></svg>
<div class="a row" style="top:520.65px;height:62.5px;background:#ffffff">
<div class="a" style="left:0;top:0;width:49.2px;height:100%;background:#f7f7f7"></div>
<div class="a sep" style="left:49.2px"></div>
<div class="a sep" style="left:137.2px"></div>
<div class="a sep" style="left:226.2px"></div>
<div class="a sep" style="left:330.7px"></div>
<div class="a sep" style="left:487.2px"></div>
<div class="a sep" style="left:593.7px"></div>
<div class="a sep" style="left:660.2px"></div>
<div class="a sep" style="left:725.2px"></div>
<div class="a sep" style="left:811.7px"></div>
<div class="a sep" style="left:948.5px"></div>
<div class="a sep" style="left:1079.2px"></div>
</div>
<div class="a badge" style="left:76.2px;top:542.95px"></div>
<span class="t" style="left:95.75px;transform-origin:50% 50%;transform:translateX(-50%) scale(0.2619,0.2480);top:518.05px;font-size:52px;line-height:68px;color:#fff;font-weight:700;font-family:'Liberation Sans',sans-serif;">4116</span>
<span class="t" style="left:126.90px;transform-origin:0 50%;transform:scale(0.2517,0.2464);top:519.15px;font-size:40px;line-height:52px;color:#111;font-weight:700;font-family:'Liberation Sans',sans-serif;">2026-03-23</span>
<span class="t" style="left:126.90px;transform-origin:0 50%;transform:scale(0.2492,0.2464);top:532.65px;font-size:40px;line-height:52px;color:#111;font-weight:700;font-family:'Liberation Sans',sans-serif;">05:16</span>
<span class="t" style="left:215.28px;transform-origin:0 50%;transform:scale(0.2165,0.2450);top:523.65px;font-size:42.0px;line-height:56px;color:#3f3f45;font-weight:400;font-family:'Liberation Sans',sans-serif;-webkit-text-stroke:0.4px #3f3f45;">EDWIN YANGUEZ</span>
<span class="t" style="right:539.70px;transform-origin:100% 50%;transform:scale(0.2334,0.2560);top:501.30px;font-size:60px;line-height:80px;color:#1e88e5;font-weight:400;font-family:'Liberation Sans',sans-serif;-webkit-text-stroke:1.0px #1e88e5;">PCK - 38300</span>
<div class="a" style="left:576px;top:554.15px;width:83.6px;height:17.3px;border-radius:3px;background:#f8eff2"></div>
<span class="t" style="right:542.66px;transform-origin:100% 50%;transform:scale(0.2440,0.2806);top:527.50px;font-size:54.0px;line-height:72px;color:#c7254e;font-weight:400;font-family:'Liberation Mono',monospace;-webkit-text-stroke:0.88px #c7254e;">Ref: 40595</span>
<span class="t" style="right:473.00px;transform-origin:100% 50%;transform:scale(0.2697,0.2585);top:512.00px;font-size:60px;line-height:80px;color:#2b2b33;font-weight:400;font-family:'Liberation Sans',sans-serif;-webkit-text-stroke:0.8px #2b2b33;">6</span>
<span class="t" style="left:751.96px;transform-origin:0 50%;transform:scale(0.2853,0.2500);top:508.10px;font-size:64px;line-height:84px;color:#ef5366;font-weight:400;font-family:'Liberation Sans',sans-serif;-webkit-text-stroke:1.6px #ef5366;">$<span style="font-size:.79em;margin-left:.08em">0.00</span></span>
<span class="t" style="left:803.30px;transform-origin:0 50%;transform:scale(0.2249,0.2500);top:508.75px;font-size:40px;line-height:52px;color:#333;font-weight:400;font-family:'Liberation Sans',sans-serif;">PICKING</span>
<div class="a" style="left:803.2px;top:541.35px;width:74.5px;height:10.4px;border-radius:5.2px;background-color:#26a69a;background-image:linear-gradient(45deg,rgba(255,255,255,.16) 25%,transparent 25%,transparent 50%,rgba(255,255,255,.16) 50%,rgba(255,255,255,.16) 75%,transparent 75%,transparent);background-size:27.4px 27.4px;background-position:4.5px 0;"></div>
<div class="a pill" style="left:866px;top:543.65px;width:33.5px"></div>
<span class="t" style="left:869.00px;transform-origin:0 50%;transform:scale(0.2309,0.2536);top:525.25px;font-size:40px;line-height:52px;color:#fff;font-weight:700;font-family:'Liberation Sans',sans-serif;-webkit-text-stroke:1.0px #fff;text-shadow:2px 2px 6px rgba(0,0,0,.8);letter-spacing:4px;">100%</span>
<span class="t" style="left:803.30px;transform-origin:0 50%;transform:scale(0.2233,0.2500);top:533.15px;font-size:40px;line-height:52px;color:#333;font-weight:400;font-family:'Liberation Sans',sans-serif;">QC</span>
<div class="a" style="left:803.2px;top:565.95px;width:74.7px;height:10.2px;border-radius:5.1px;background:rgba(0,0,0,.075)"></div>
<div class="a pill" style="left:803.8px;top:568.25px;width:20.5px"></div>
<span class="t" style="left:806.20px;transform-origin:0 50%;transform:scale(0.2281,0.2536);top:549.85px;font-size:40px;line-height:52px;color:#fff;font-weight:700;font-family:'Liberation Sans',sans-serif;-webkit-text-stroke:1.0px #fff;text-shadow:2px 2px 6px rgba(0,0,0,.8);letter-spacing:4px;">0%</span>
<div class="a btn" style="left:890px;top:536.90px;width:125px;background:#1e88e5"><div class="a" style="left:98.5px;top:0;width:27px;height:30px;background:#1a6fc0"></div></div>
<span class="t" style="left:901.82px;transform-origin:0 50%;transform:scale(0.2165,0.2536);top:519.65px;font-size:48px;line-height:64px;color:#fff;font-weight:400;font-family:'Liberation Sans',sans-serif;-webkit-text-stroke:1.4px #fff;">CARGA ZONAS</span>
<svg class="a" style="left:994.7px;top:546.90px" width="13.4" height="10.6" viewBox="0 0 13.4 10.6"><rect x="0.00" y="0.00" width="3.7" height="2.9" rx="0.5" fill="#fff"/><rect x="0.00" y="3.85" width="3.7" height="2.9" rx="0.5" fill="#fff"/><rect x="0.00" y="7.70" width="3.7" height="2.9" rx="0.5" fill="#fff"/><rect x="4.85" y="0.00" width="3.7" height="2.9" rx="0.5" fill="#fff"/><rect x="4.85" y="3.85" width="3.7" height="2.9" rx="0.5" fill="#fff"/><rect x="4.85" y="7.70" width="3.7" height="2.9" rx="0.5" fill="#fff"/><rect x="9.70" y="0.00" width="3.7" height="2.9" rx="0.5" fill="#fff"/><rect x="9.70" y="3.85" width="3.7" height="2.9" rx="0.5" fill="#fff"/><rect x="9.70" y="7.70" width="3.7" height="2.9" rx="0.5" fill="#fff"/></svg>
<div class="a btn" style="left:1026.7px;top:536.90px;width:118.5px;background:#26a69a"><div class="a" style="left:92.5px;top:0;width:27px;height:30px;background:#218a7c"></div></div>
<span class="t" style="left:1038.42px;transform-origin:0 50%;transform:scale(0.2142,0.2476);top:519.80px;font-size:48px;line-height:64px;color:#fff;font-weight:400;font-family:'Liberation Sans',sans-serif;-webkit-text-stroke:1.4px #fff;">VER DETALLE</span>
<svg class="a" style="left:1125px;top:546.80px" width="13.4" height="11.2" viewBox="0 0 13.4 11.2"><rect x="0" y="0.00" width="3.6" height="3.2" rx="0.4" fill="#fff"/><rect x="4.6" y="0.00" width="8.8" height="3.2" rx="0.4" fill="#fff"/><rect x="0" y="4.00" width="3.6" height="3.2" rx="0.4" fill="#fff"/><rect x="4.6" y="4.00" width="8.8" height="3.2" rx="0.4" fill="#fff"/><rect x="0" y="8.00" width="3.6" height="3.2" rx="0.4" fill="#fff"/><rect x="4.6" y="8.00" width="8.8" height="3.2" rx="0.4" fill="#fff"/></svg>
<div class="a row" style="top:583.15px;height:62.5px;background:#eeeeee">
<div class="a" style="left:0;top:0;width:49.2px;height:100%;background:#f6f6f6"></div>
<div class="a sep" style="left:49.2px"></div>
<div class="a sep" style="left:137.2px"></div>
<div class="a sep" style="left:226.2px"></div>
<div class="a sep" style="left:330.7px"></div>
<div class="a sep" style="left:487.2px"></div>
<div class="a sep" style="left:593.7px"></div>
<div class="a sep" style="left:660.2px"></div>
<div class="a sep" style="left:725.2px"></div>
<div class="a sep" style="left:811.7px"></div>
<div class="a sep" style="left:948.5px"></div>
<div class="a sep" style="left:1079.2px"></div>
</div>
<div class="a badge" style="left:76.2px;top:605.45px"></div>
<span class="t" style="left:95.75px;transform-origin:50% 50%;transform:translateX(-50%) scale(0.2619,0.2480);top:580.55px;font-size:52px;line-height:68px;color:#fff;font-weight:700;font-family:'Liberation Sans',sans-serif;">4117</span>
<span class="t" style="left:126.90px;transform-origin:0 50%;transform:scale(0.2517,0.2464);top:581.65px;font-size:40px;line-height:52px;color:#111;font-weight:700;font-family:'Liberation Sans',sans-serif;">2026-03-23</span>
<span class="t" style="left:126.90px;transform-origin:0 50%;transform:scale(0.2492,0.2464);top:595.15px;font-size:40px;line-height:52px;color:#111;font-weight:700;font-family:'Liberation Sans',sans-serif;">05:16</span>
<span class="t" style="left:215.28px;transform-origin:0 50%;transform:scale(0.2165,0.2450);top:586.15px;font-size:42.0px;line-height:56px;color:#3f3f45;font-weight:400;font-family:'Liberation Sans',sans-serif;-webkit-text-stroke:0.4px #3f3f45;">EDWIN YANGUEZ</span>
<span class="t" style="right:539.70px;transform-origin:100% 50%;transform:scale(0.2334,0.2560);top:563.80px;font-size:60px;line-height:80px;color:#1e88e5;font-weight:400;font-family:'Liberation Sans',sans-serif;-webkit-text-stroke:1.0px #1e88e5;">PCK - 38293</span>
<div class="a" style="left:576px;top:616.65px;width:83.6px;height:17.3px;border-radius:3px;background:#f8eff2"></div>
<span class="t" style="right:542.66px;transform-origin:100% 50%;transform:scale(0.2440,0.2806);top:590.00px;font-size:54.0px;line-height:72px;color:#c7254e;font-weight:400;font-family:'Liberation Mono',monospace;-webkit-text-stroke:0.88px #c7254e;">Ref: 40576</span>
<span class="t" style="right:473.00px;transform-origin:100% 50%;transform:scale(0.2547,0.2585);top:574.50px;font-size:60px;line-height:80px;color:#2b2b33;font-weight:400;font-family:'Liberation Sans',sans-serif;-webkit-text-stroke:0.8px #2b2b33;">90</span>
<span class="t" style="left:751.96px;transform-origin:0 50%;transform:scale(0.2853,0.2500);top:570.60px;font-size:64px;line-height:84px;color:#ef5366;font-weight:400;font-family:'Liberation Sans',sans-serif;-webkit-text-stroke:1.6px #ef5366;">$<span style="font-size:.79em;margin-left:.08em">0.00</span></span>
<span class="t" style="left:803.30px;transform-origin:0 50%;transform:scale(0.2249,0.2500);top:571.25px;font-size:40px;line-height:52px;color:#333;font-weight:400;font-family:'Liberation Sans',sans-serif;">PICKING</span>
<div class="a" style="left:803.2px;top:603.85px;width:74.5px;height:10.4px;border-radius:5.2px;background-color:#26a69a;background-image:linear-gradient(45deg,rgba(255,255,255,.16) 25%,transparent 25%,transparent 50%,rgba(255,255,255,.16) 50%,rgba(255,255,255,.16) 75%,transparent 75%,transparent);background-size:27.4px 27.4px;background-position:4.5px 0;"></div>
<div class="a pill" style="left:866px;top:606.15px;width:33.5px"></div>
<span class="t" style="left:869.00px;transform-origin:0 50%;transform:scale(0.2309,0.2536);top:587.75px;font-size:40px;line-height:52px;color:#fff;font-weight:700;font-family:'Liberation Sans',sans-serif;-webkit-text-stroke:1.0px #fff;text-shadow:2px 2px 6px rgba(0,0,0,.8);letter-spacing:4px;">100%</span>
<span class="t" style="left:803.30px;transform-origin:0 50%;transform:scale(0.2233,0.2500);top:595.65px;font-size:40px;line-height:52px;color:#333;font-weight:400;font-family:'Liberation Sans',sans-serif;">QC</span>
<div class="a" style="left:803.2px;top:628.45px;width:74.7px;height:10.2px;border-radius:5.1px;background:rgba(0,0,0,.075)"></div>
<div class="a pill" style="left:803.8px;top:630.75px;width:20.5px"></div>
<span class="t" style="left:806.20px;transform-origin:0 50%;transform:scale(0.2281,0.2536);top:612.35px;font-size:40px;line-height:52px;color:#fff;font-weight:700;font-family:'Liberation Sans',sans-serif;-webkit-text-stroke:1.0px #fff;text-shadow:2px 2px 6px rgba(0,0,0,.8);letter-spacing:4px;">0%</span>
<div class="a btn" style="left:890px;top:599.40px;width:125px;background:#1e88e5"><div class="a" style="left:98.5px;top:0;width:27px;height:30px;background:#1a6fc0"></div></div>
<span class="t" style="left:901.82px;transform-origin:0 50%;transform:scale(0.2165,0.2536);top:582.15px;font-size:48px;line-height:64px;color:#fff;font-weight:400;font-family:'Liberation Sans',sans-serif;-webkit-text-stroke:1.4px #fff;">CARGA ZONAS</span>
<svg class="a" style="left:994.7px;top:609.40px" width="13.4" height="10.6" viewBox="0 0 13.4 10.6"><rect x="0.00" y="0.00" width="3.7" height="2.9" rx="0.5" fill="#fff"/><rect x="0.00" y="3.85" width="3.7" height="2.9" rx="0.5" fill="#fff"/><rect x="0.00" y="7.70" width="3.7" height="2.9" rx="0.5" fill="#fff"/><rect x="4.85" y="0.00" width="3.7" height="2.9" rx="0.5" fill="#fff"/><rect x="4.85" y="3.85" width="3.7" height="2.9" rx="0.5" fill="#fff"/><rect x="4.85" y="7.70" width="3.7" height="2.9" rx="0.5" fill="#fff"/><rect x="9.70" y="0.00" width="3.7" height="2.9" rx="0.5" fill="#fff"/><rect x="9.70" y="3.85" width="3.7" height="2.9" rx="0.5" fill="#fff"/><rect x="9.70" y="7.70" width="3.7" height="2.9" rx="0.5" fill="#fff"/></svg>
<div class="a btn" style="left:1026.7px;top:599.40px;width:118.5px;background:#26a69a"><div class="a" style="left:92.5px;top:0;width:27px;height:30px;background:#218a7c"></div></div>
<span class="t" style="left:1038.42px;transform-origin:0 50%;transform:scale(0.2142,0.2476);top:582.30px;font-size:48px;line-height:64px;color:#fff;font-weight:400;font-family:'Liberation Sans',sans-serif;-webkit-text-stroke:1.4px #fff;">VER DETALLE</span>
<svg class="a" style="left:1125px;top:609.30px" width="13.4" height="11.2" viewBox="0 0 13.4 11.2"><rect x="0" y="0.00" width="3.6" height="3.2" rx="0.4" fill="#fff"/><rect x="4.6" y="0.00" width="8.8" height="3.2" rx="0.4" fill="#fff"/><rect x="0" y="4.00" width="3.6" height="3.2" rx="0.4" fill="#fff"/><rect x="4.6" y="4.00" width="8.8" height="3.2" rx="0.4" fill="#fff"/><rect x="0" y="8.00" width="3.6" height="3.2" rx="0.4" fill="#fff"/><rect x="4.6" y="8.00" width="8.8" height="3.2" rx="0.4" fill="#fff"/></svg>
<div class="a row" style="top:645.65px;height:62.5px;background:#ffffff">
<div class="a" style="left:0;top:0;width:49.2px;height:100%;background:#f7f7f7"></div>
<div class="a sep" style="left:49.2px"></div>
<div class="a sep" style="left:137.2px"></div>
<div class="a sep" style="left:226.2px"></div>
<div class="a sep" style="left:330.7px"></div>
<div class="a sep" style="left:487.2px"></div>
<div class="a sep" style="left:593.7px"></div>
<div class="a sep" style="left:660.2px"></div>
<div class="a sep" style="left:725.2px"></div>
<div class="a sep" style="left:811.7px"></div>
<div class="a sep" style="left:948.5px"></div>
<div class="a sep" style="left:1079.2px"></div>
</div>
<div class="a badge" style="left:76.2px;top:667.95px"></div>
<span class="t" style="left:95.75px;transform-origin:50% 50%;transform:translateX(-50%) scale(0.2619,0.2480);top:643.05px;font-size:52px;line-height:68px;color:#fff;font-weight:700;font-family:'Liberation Sans',sans-serif;">4118</span>
<span class="t" style="left:126.90px;transform-origin:0 50%;transform:scale(0.2517,0.2464);top:644.15px;font-size:40px;line-height:52px;color:#111;font-weight:700;font-family:'Liberation Sans',sans-serif;">2026-03-23</span>
<span class="t" style="left:126.90px;transform-origin:0 50%;transform:scale(0.2492,0.2464);top:657.65px;font-size:40px;line-height:52px;color:#111;font-weight:700;font-family:'Liberation Sans',sans-serif;">05:16</span>
<span class="t" style="left:215.28px;transform-origin:0 50%;transform:scale(0.2165,0.2450);top:648.65px;font-size:42.0px;line-height:56px;color:#3f3f45;font-weight:400;font-family:'Liberation Sans',sans-serif;-webkit-text-stroke:0.4px #3f3f45;">EDWIN YANGUEZ</span>
<span class="t" style="right:539.70px;transform-origin:100% 50%;transform:scale(0.2334,0.2560);top:626.30px;font-size:60px;line-height:80px;color:#1e88e5;font-weight:400;font-family:'Liberation Sans',sans-serif;-webkit-text-stroke:1.0px #1e88e5;">PCK - 38293</span>
<div class="a" style="left:576px;top:679.15px;width:83.6px;height:17.3px;border-radius:3px;background:#f8eff2"></div>
<span class="t" style="right:542.66px;transform-origin:100% 50%;transform:scale(0.2440,0.2806);top:652.50px;font-size:54.0px;line-height:72px;color:#c7254e;font-weight:400;font-family:'Liberation Mono',monospace;-webkit-text-stroke:0.88px #c7254e;">Ref: 40577</span>
<span class="t" style="right:473.00px;transform-origin:100% 50%;transform:scale(0.2547,0.2585);top:637.00px;font-size:60px;line-height:80px;color:#2b2b33;font-weight:400;font-family:'Liberation Sans',sans-serif;-webkit-text-stroke:0.8px #2b2b33;">12</span>
<span class="t" style="left:751.96px;transform-origin:0 50%;transform:scale(0.2853,0.2500);top:633.10px;font-size:64px;line-height:84px;color:#ef5366;font-weight:400;font-family:'Liberation Sans',sans-serif;-webkit-text-stroke:1.6px #ef5366;">$<span style="font-size:.79em;margin-left:.08em">0.00</span></span>
<span class="t" style="left:803.30px;transform-origin:0 50%;transform:scale(0.2249,0.2500);top:633.75px;font-size:40px;line-height:52px;color:#333;font-weight:400;font-family:'Liberation Sans',sans-serif;">PICKING</span>
<div class="a" style="left:803.2px;top:666.35px;width:74.5px;height:10.4px;border-radius:5.2px;background-color:#26a69a;background-image:linear-gradient(45deg,rgba(255,255,255,.16) 25%,transparent 25%,transparent 50%,rgba(255,255,255,.16) 50%,rgba(255,255,255,.16) 75%,transparent 75%,transparent);background-size:27.4px 27.4px;background-position:4.5px 0;"></div>
<div class="a pill" style="left:866px;top:668.65px;width:33.5px"></div>
<span class="t" style="left:869.00px;transform-origin:0 50%;transform:scale(0.2309,0.2536);top:650.25px;font-size:40px;line-height:52px;color:#fff;font-weight:700;font-family:'Liberation Sans',sans-serif;-webkit-text-stroke:1.0px #fff;text-shadow:2px 2px 6px rgba(0,0,0,.8);letter-spacing:4px;">100%</span>
<span class="t" style="left:803.30px;transform-origin:0 50%;transform:scale(0.2233,0.2500);top:658.15px;font-size:40px;line-height:52px;color:#333;font-weight:400;font-family:'Liberation Sans',sans-serif;">QC</span>
<div class="a" style="left:803.2px;top:690.95px;width:74.7px;height:10.2px;border-radius:5.1px;background:rgba(0,0,0,.075)"></div>
<div class="a pill" style="left:803.8px;top:693.25px;width:20.5px"></div>
<span class="t" style="left:806.20px;transform-origin:0 50%;transform:scale(0.2281,0.2536);top:674.85px;font-size:40px;line-height:52px;color:#fff;font-weight:700;font-family:'Liberation Sans',sans-serif;-webkit-text-stroke:1.0px #fff;text-shadow:2px 2px 6px rgba(0,0,0,.8);letter-spacing:4px;">0%</span>
<div class="a btn" style="left:890px;top:661.90px;width:125px;background:#1e88e5"><div class="a" style="left:98.5px;top:0;width:27px;height:30px;background:#1a6fc0"></div></div>
<span class="t" style="left:901.82px;transform-origin:0 50%;transform:scale(0.2165,0.2536);top:644.65px;font-size:48px;line-height:64px;color:#fff;font-weight:400;font-family:'Liberation Sans',sans-serif;-webkit-text-stroke:1.4px #fff;">CARGA ZONAS</span>
<svg class="a" style="left:994.7px;top:671.90px" width="13.4" height="10.6" viewBox="0 0 13.4 10.6"><rect x="0.00" y="0.00" width="3.7" height="2.9" rx="0.5" fill="#fff"/><rect x="0.00" y="3.85" width="3.7" height="2.9" rx="0.5" fill="#fff"/><rect x="0.00" y="7.70" width="3.7" height="2.9" rx="0.5" fill="#fff"/><rect x="4.85" y="0.00" width="3.7" height="2.9" rx="0.5" fill="#fff"/><rect x="4.85" y="3.85" width="3.7" height="2.9" rx="0.5" fill="#fff"/><rect x="4.85" y="7.70" width="3.7" height="2.9" rx="0.5" fill="#fff"/><rect x="9.70" y="0.00" width="3.7" height="2.9" rx="0.5" fill="#fff"/><rect x="9.70" y="3.85" width="3.7" height="2.9" rx="0.5" fill="#fff"/><rect x="9.70" y="7.70" width="3.7" height="2.9" rx="0.5" fill="#fff"/></svg>
<div class="a btn" style="left:1026.7px;top:661.90px;width:118.5px;background:#26a69a"><div class="a" style="left:92.5px;top:0;width:27px;height:30px;background:#218a7c"></div></div>
<span class="t" style="left:1038.42px;transform-origin:0 50%;transform:scale(0.2142,0.2476);top:644.80px;font-size:48px;line-height:64px;color:#fff;font-weight:400;font-family:'Liberation Sans',sans-serif;-webkit-text-stroke:1.4px #fff;">VER DETALLE</span>
<svg class="a" style="left:1125px;top:671.80px" width="13.4" height="11.2" viewBox="0 0 13.4 11.2"><rect x="0" y="0.00" width="3.6" height="3.2" rx="0.4" fill="#fff"/><rect x="4.6" y="0.00" width="8.8" height="3.2" rx="0.4" fill="#fff"/><rect x="0" y="4.00" width="3.6" height="3.2" rx="0.4" fill="#fff"/><rect x="4.6" y="4.00" width="8.8" height="3.2" rx="0.4" fill="#fff"/><rect x="0" y="8.00" width="3.6" height="3.2" rx="0.4" fill="#fff"/><rect x="4.6" y="8.00" width="8.8" height="3.2" rx="0.4" fill="#fff"/></svg>
<div id="side" class="a"><div class="a" style="left:0;top:0;width:48px;height:37px;background:#f2f2f2"></div></div>
<div class="a" style="z-index:6;left:0;top:0">
<svg class="a" style="left:16.2px;top:54.300000000000004px" width="13.6" height="13.6" viewBox="-6.8 -6.8 13.6 13.6"><path d="M4.18 -0.96 L5.73 -0.91 L5.73 0.91 L4.18 0.96 L3.64 2.28 L4.69 3.41 L3.41 4.69 L2.28 3.64 L0.96 4.18 L0.91 5.73 L-0.91 5.73 L-0.96 4.18 L-2.28 3.64 L-3.41 4.69 L-4.69 3.41 L-3.64 2.28 L-4.18 0.96 L-5.73 0.91 L-5.73 -0.91 L-4.18 -0.96 L-3.64 -2.28 L-4.69 -3.41 L-3.41 -4.69 L-2.28 -3.64 L-0.96 -4.18 L-0.91 -5.73 L0.91 -5.73 L0.96 -4.18 L2.28 -3.64 L3.41 -4.69 L4.69 -3.41 L3.64 -2.28 Z M-2.32 0.00 a2.32 2.32 0 1 0 4.64 0 a2.32 2.32 0 1 0 -4.64 0 Z" fill="#3c3c41" fill-rule="evenodd" stroke="#3c3c41" stroke-width="0.6" stroke-linejoin="round"/></svg>
<svg class="a" style="left:16.2px;top:90.60000000000001px" width="13.6" height="13.6" viewBox="-6.8 -6.8 13.6 13.6"><path d="M4.18 -0.96 L5.73 -0.91 L5.73 0.91 L4.18 0.96 L3.64 2.28 L4.69 3.41 L3.41 4.69 L2.28 3.64 L0.96 4.18 L0.91 5.73 L-0.91 5.73 L-0.96 4.18 L-2.28 3.64 L-3.41 4.69 L-4.69 3.41 L-3.64 2.28 L-4.18 0.96 L-5.73 0.91 L-5.73 -0.91 L-4.18 -0.96 L-3.64 -2.28 L-4.69 -3.41 L-3.41 -4.69 L-2.28 -3.64 L-0.96 -4.18 L-0.91 -5.73 L0.91 -5.73 L0.96 -4.18 L2.28 -3.64 L3.41 -4.69 L4.69 -3.41 L3.64 -2.28 Z M-2.32 0.00 a2.32 2.32 0 1 0 4.64 0 a2.32 2.32 0 1 0 -4.64 0 Z" fill="#0c0c0c" fill-rule="evenodd" stroke="#0c0c0c" stroke-width="0.6" stroke-linejoin="round"/></svg>
<svg class="a" style="left:15.9px;top:127.6px" width="14.1" height="11.5" viewBox="0 0 14.1 11.5"><rect x="0" y="0.00" width="2.01" height="2.19" rx="0.3" fill="#0a0a0a"/><rect x="3.22" y="0.00" width="10.88" height="2.19" rx="0.3" fill="#0a0a0a"/><rect x="0" y="3.10" width="2.01" height="2.19" rx="0.3" fill="#0a0a0a"/><rect x="3.22" y="3.10" width="10.88" height="2.19" rx="0.3" fill="#0a0a0a"/><rect x="0" y="6.21" width="2.01" height="2.19" rx="0.3" fill="#0a0a0a"/><rect x="3.22" y="6.21" width="10.88" height="2.19" rx="0.3" fill="#0a0a0a"/><rect x="0" y="9.31" width="2.01" height="2.19" rx="0.3" fill="#0a0a0a"/><rect x="3.22" y="9.31" width="10.88" height="2.19" rx="0.3" fill="#0a0a0a"/></svg>
<div class="a" style="left:0;top:644.2px;width:27.5px;height:23px;background:#1b2028;border-top:2.5px solid #f5626c;box-sizing:border-box"></div>
<svg class="a" style="left:5.5px;top:648.5px" width="16" height="16" viewBox="0 0 16 16"><path d="M0.6 2.2 L3.6 0.6 L6.4 2.2 V9.2 L9.6 7.4 V4.6 L12.6 3 L15.2 4.6 V7.6 L6.4 12.8 L0.6 9.4 Z M3.6 3.8 V9.6 L6.4 11.2 M3.6 3.8 L0.6 2.2 M3.6 3.8 L6.4 2.2 M6.4 9.2 L9.6 11 M9.6 7.4 L12.6 9.2 M12.6 6.2 L15.2 4.6 M12.6 6.2 L9.6 4.6 M12.6 6.2 V9.2 M6.4 12.8 V15 L0.6 11.6 V9.4 M6.4 15 L15.2 9.8 V7.6" fill="none" stroke="#a54a2e" stroke-width="0.9" stroke-linejoin="round"/></svg>
</div>
<div id="top" class="a"></div>
<div class="a" style="z-index:7;left:0;top:0">
<svg class="a" style="left:15px;top:9px" width="18" height="26" viewBox="0 0 18 26"><path d="M2.45 24 V1.2 H16 M2.45 14.9 H14.7" fill="none" stroke="#ec7a1e" stroke-width="1.9"/></svg>
<svg class="a" style="left:64px;top:15px" width="14" height="10" viewBox="0 0 14 10"><path d="M0.6 1.5 H13 M0.6 5 H13 M0.6 8.5 H13" stroke="#f0f0f0" stroke-width="1.4" fill="none"/></svg>
<svg class="a" style="left:1110px;top:6px" width="29" height="29" viewBox="0 0 29 29"><circle cx="14.4" cy="14.1" r="11.9" fill="none" stroke="#e9e9e9" stroke-width="1.4"/></svg>
<svg class="a" style="left:1118.7px;top:15px" width="11.5" height="11" viewBox="0 0 11.5 11"><path d="M0 11 V4.2 L2.7 6 V4.2 L5.4 6 V4.2 L8.1 6 V0.3 H10.2 V11 Z" fill="#e6e6e6"/><path d="M1.2 7.6h1.6v2h-1.6z M3.9 7.6h1.6v2h-1.6z M6.6 7.6h1.6v2h-1.6z" fill="#6f7073"/></svg>
<div class="a" style="left:1151px;top:7.9px;width:25px;height:25px;border-radius:50%;background:#1b98d3;overflow:hidden"></div>
<svg class="a" style="left:1151px;top:7.9px" width="25" height="25" viewBox="0 0 25 25"><path d="M12.5 4.6 C15 4.6 16.3 6.4 16.3 8.8 C16.3 10.8 15.5 12.4 14.6 13.3 C14.4 14.6 14.8 15.2 16.2 15.7 C18.4 16.4 19.6 16.8 19.6 18.2 V19.6 H5.4 V18.2 C5.4 16.8 6.6 16.4 8.8 15.7 C10.2 15.2 10.6 14.6 10.4 13.3 C9.5 12.4 8.7 10.8 8.7 8.8 C8.7 6.4 10 4.6 12.5 4.6 Z" fill="#fff"/></svg>
</div>
</div></body></html>
